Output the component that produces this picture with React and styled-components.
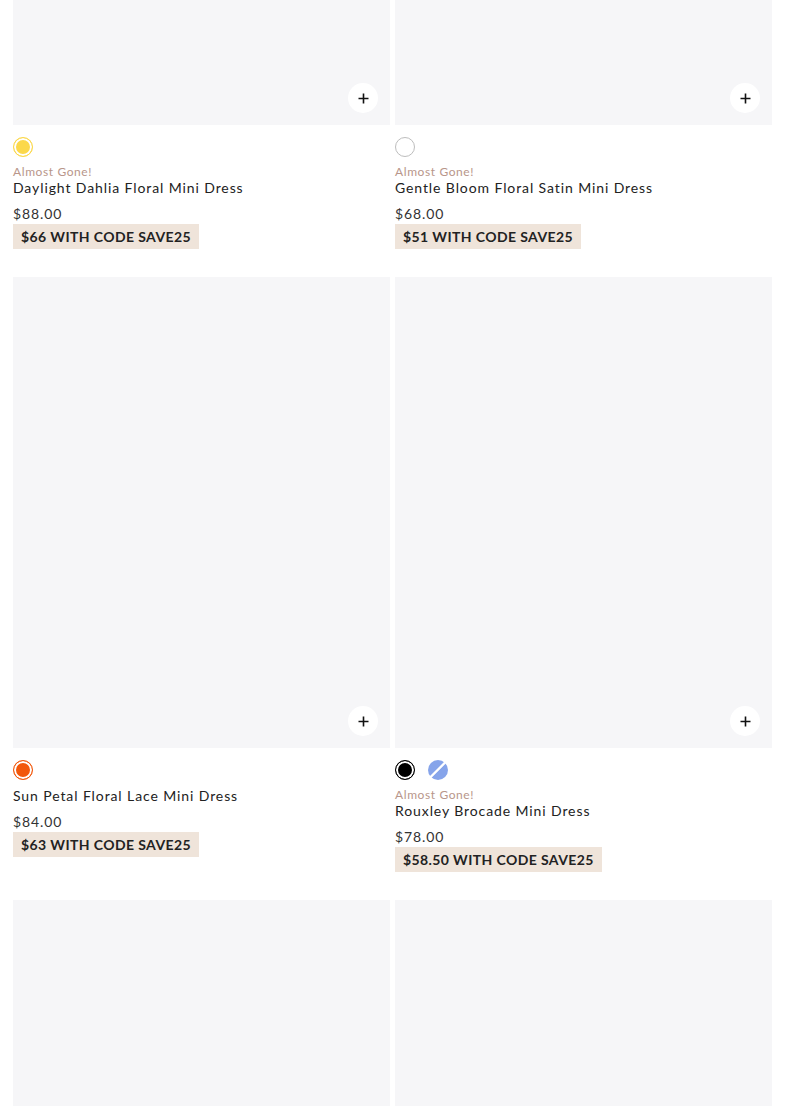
import React from 'react';
import styled, { createGlobalStyle } from 'styled-components';

const products = [
  { name: 'Daylight Dahlia Floral Mini Dress', price: '$88.00', deal: '$66', low: true, swatches: [{ color: '#fbd84a', ring: '#fbd84a', selected: true }] },
  { name: 'Gentle Bloom Floral Satin Mini Dress', price: '$68.00', deal: '$51', low: true, swatches: [{ color: '#ffffff', ring: '#bdbdbd', selected: true }] },
  { name: 'Sun Petal Floral Lace Mini Dress', price: '$84.00', deal: '$63', low: false, swatches: [{ color: '#f2580c', ring: '#f2580c', selected: true }] },
  { name: 'Rouxley Brocade Mini Dress', price: '$78.00', deal: '$58.50', low: true, swatches: [{ color: '#000000', ring: '#000000', selected: true }, { color: '#86a4ea', pattern: true }] },
  { name: '', price: '', deal: '', low: false, swatches: [] },
  { name: '', price: '', deal: '', low: false, swatches: [] },
];

const App = () => (
  <>
    <GlobalStyle />
    <Page>
      <Grid>
        {products.map((p, i) => (
          <Card key={i}>
            <ImageBox>
              <AddButton aria-label="Add">
                <svg width="11" height="11" viewBox="0 0 11 11">
                  <path d="M5.5 0.5v10M0.5 5.5h10" stroke="#111" strokeWidth="1.6" />
                </svg>
              </AddButton>
            </ImageBox>
            {p.name && (
              <Info>
                <Swatches>
                  {p.swatches.map((s, j) => (
                    <Swatch key={j} $color={s.color} $ring={s.ring} $selected={s.selected} $pattern={s.pattern} />
                  ))}
                </Swatches>
                {p.low && <Low>Almost Gone!</Low>}
                <Name>{p.name}</Name>
                <Price>{p.price}</Price>
                <Deal>{p.deal} WITH CODE SAVE25</Deal>
              </Info>
            )}
          </Card>
        ))}
      </Grid>
    </Page>
  </>
);

export default App;

const GlobalStyle = createGlobalStyle`
  body {
    margin: 0;
    background: #fff;
    font-family: Lato, 'Open Sans', sans-serif;
    overflow: hidden;
  }
`;

const Page = styled.div`
  padding: 0 13px;
  height: 1106px;
  overflow: hidden;
`;

const Grid = styled.div`
  display: grid;
  grid-template-columns: 1fr 1fr;
  column-gap: 5px;
  row-gap: 28px;
  margin-top: -346px;
`;

const Card = styled.div`
  display: flex;
  flex-direction: column;
`;

const ImageBox = styled.div`
  position: relative;
  height: 471px;
  background: #f6f6f8;
`;

const AddButton = styled.button`
  position: absolute;
  right: 12px;
  bottom: 12px;
  width: 30px;
  height: 30px;
  border: none;
  border-radius: 50%;
  background: #fff;
  display: flex;
  align-items: center;
  justify-content: center;
  padding: 0;
`;

const Info = styled.div`
  display: flex;
  flex-direction: column;
  align-items: flex-start;
  padding-top: 12px;
`;

const Swatches = styled.div`
  display: flex;
  gap: 13px;
  height: 20px;
  margin-bottom: 7px;
`;

const Swatch = styled.span`
  width: 20px;
  height: 20px;
  border-radius: 50%;
  box-sizing: border-box;
  background: ${(p) =>
    p.$pattern
      ? `linear-gradient(135deg, ${p.$color} 44%, #fff 46%, #fff 52%, ${p.$color} 54%)`
      : p.$color};
  border: ${(p) => (p.$selected ? `1.5px solid ${p.$ring}` : 'none')};
  box-shadow: ${(p) => (p.$selected ? 'inset 0 0 0 2px #fff' : 'none')};
`;

const Low = styled.div`
  font-size: 12px;
  line-height: 15px;
  letter-spacing: 0.6px;
  color: #b8968a;
`;

const Name = styled.div`
  font-size: 14px;
  line-height: 18px;
  letter-spacing: 0.9px;
  color: #222;
`;

const Price = styled.div`
  margin-top: 8px;
  font-size: 14px;
  line-height: 18px;
  letter-spacing: 0.9px;
  color: #333;
`;

const Deal = styled.div`
  margin-top: 1px;
  background: #efe4da;
  padding: 0 8px;
  height: 25px;
  line-height: 25px;
  font-size: 14px;
  font-weight: 700;
  letter-spacing: 0.4px;
  color: #222;
`;
